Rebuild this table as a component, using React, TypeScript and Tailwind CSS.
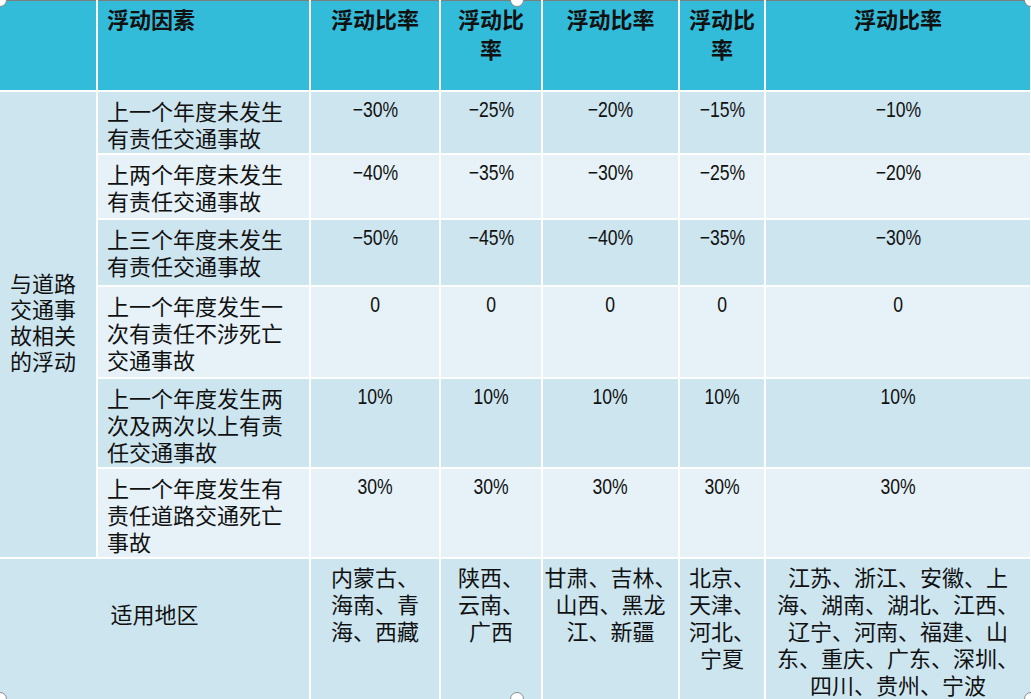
const HEAD = "bg-[#33bcd9]";
const DARK = "bg-[#cde5ef]";
const LIGHT = "bg-[#e6f2f7]";

const cell = "border-r-2 border-b-2 border-white align-top p-0";

type Row = { label: string[]; vals: string[]; h: string };

const rows: Row[] = [
  { label: ["上一个年度未发生", "有责任交通事故"], vals: ["−30%", "−25%", "−20%", "−15%", "−10%"], h: "h-[63px]" },
  { label: ["上两个年度未发生", "有责任交通事故"], vals: ["−40%", "−35%", "−30%", "−25%", "−20%"], h: "h-[65px]" },
  { label: ["上三个年度未发生", "有责任交通事故"], vals: ["−50%", "−45%", "−40%", "−35%", "−30%"], h: "h-[67px]" },
  { label: ["上一个年度发生一", "次有责任不涉死亡", "交通事故"], vals: ["0", "0", "0", "0", "0"], h: "h-[92px]" },
  { label: ["上一个年度发生两", "次及两次以上有责", "任交通事故"], vals: ["10%", "10%", "10%", "10%", "10%"], h: "h-[90px]" },
  { label: ["上一个年度发生有", "责任道路交通死亡", "事故"], vals: ["30%", "30%", "30%", "30%", "30%"], h: "h-[90px]" },
];

const regions: string[][] = [
  ["内蒙古、", "海南、青", "海、西藏"],
  ["陕西、", "云南、", "广西"],
  ["甘肃、吉林、", "山西、黑龙", "江、新疆"],
  ["北京、", "天津、", "河北、", "宁夏"],
  ["江苏、浙江、安徽、上", "海、湖南、湖北、江西、", "辽宁、河南、福建、山", "东、重庆、广东、深圳、", "四川、贵州、宁波"],
];

function Lines({ lines }: { lines: string[] }) {
  return (
    <>
      {lines.map((l, i) => (
        <div key={i}>{l}</div>
      ))}
    </>
  );
}

function Handle({ pos }: { pos: string }) {
  return (
    <div
      className={`absolute h-[14px] w-[14px] rounded-full border border-[#8a8a8a] bg-white ${pos}`}
    />
  );
}

export default function App() {
  return (
    <div className="relative h-[699px] w-[1031px] overflow-hidden bg-white font-['Noto_Sans_CJK_SC',sans-serif] text-[22px] text-[#111]">
      <table className="w-[1031px] table-fixed border-collapse border-t border-t-[#7d7d7d]">
        <colgroup>
          <col className="w-[97px]" />
          <col className="w-[213px]" />
          <col className="w-[130px]" />
          <col className="w-[102px]" />
          <col className="w-[137px]" />
          <col className="w-[86px]" />
          <col className="w-[266px]" />
        </colgroup>
        <tbody>
          {/* header */}
          <tr className="h-[90px] font-bold leading-[30px]">
            <td className={`${cell} ${HEAD}`} />
            <td className={`${cell} ${HEAD} pl-[9px] pt-[2px]`}>浮动因素</td>
            <td className={`${cell} ${HEAD} pt-[2px] text-center`}>浮动比率</td>
            <td className={`${cell} ${HEAD} pt-[2px] text-center`}>
              浮动比
              <br />率
            </td>
            <td className={`${cell} ${HEAD} pt-[2px] text-center`}>浮动比率</td>
            <td className={`${cell} ${HEAD} pt-[2px] text-center`}>
              浮动比
              <br />率
            </td>
            <td className={`${cell} ${HEAD} pt-[2px] text-center`}>浮动比率</td>
          </tr>

          {rows.map((r, i) => {
            const bg = i % 2 === 0 ? DARK : LIGHT;
            return (
              <tr key={i} className={`${r.h} leading-[27px]`}>
                {i === 0 && (
                  <td
                    rowSpan={6}
                    className={`${cell} ${DARK} pl-[10px] align-middle! leading-[26px]`}
                  >
                    <div className="pb-[6px]">
                      <Lines lines={["与道路", "交通事", "故相关", "的浮动"]} />
                    </div>
                  </td>
                )}
                <td className={`${cell} ${bg} whitespace-nowrap pl-[9px] pt-[5px]`}>
                  <Lines lines={r.label} />
                </td>
                {r.vals.map((v, j) => (
                  <td key={j} className={`${cell} ${bg} pt-[2px] text-center`}>
                    <span className="inline-block scale-x-[0.8] font-['Liberation_Sans',sans-serif] text-[22px] leading-[27px]">
                      {v}
                    </span>
                  </td>
                ))}
              </tr>
            );
          })}

          {/* regions */}
          <tr className="h-[170px] leading-[27px]">
            <td colSpan={2} className={`${cell} ${DARK} pt-[41px] text-center`}>
              适用地区
            </td>
            {regions.map((lines, j) => (
              <td key={j} className={`${cell} ${DARK} whitespace-nowrap pt-[4px] text-center`}>
                <Lines lines={lines} />
              </td>
            ))}
          </tr>
        </tbody>
      </table>

      <Handle pos="left-[-7px] top-[-7px]" />
      <Handle pos="left-[510px] top-[-7px]" />
      <Handle pos="left-[1024px] top-[-7px]" />
      <Handle pos="left-[-7px] top-[692px]" />
      <Handle pos="left-[510px] top-[692px]" />
      <Handle pos="left-[1024px] top-[692px]" />
    </div>
  );
}
